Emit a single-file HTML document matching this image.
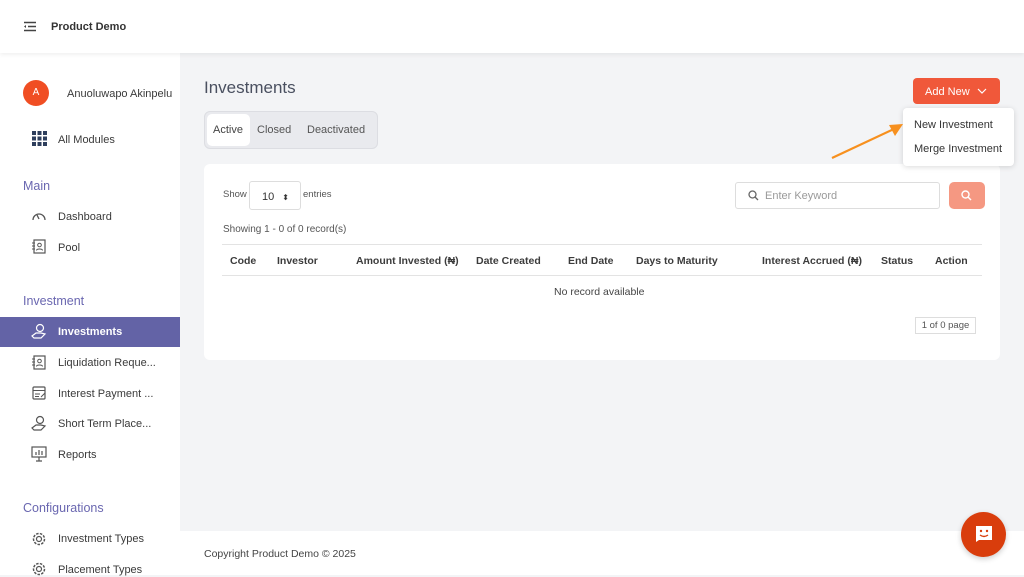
<!DOCTYPE html>
<html><head><meta charset="utf-8"><style>
*{margin:0;padding:0;box-sizing:border-box}
body{width:1024px;height:575px;overflow:hidden;background:#f3f4f6;font-family:"Liberation Sans",sans-serif;position:relative;color:#333}
.a{position:absolute}
.hdr{left:0;top:0;width:1024px;height:53px;background:#fff;box-shadow:0 2px 4px rgba(0,0,0,.06);z-index:2}
.side{left:0;top:53px;width:180px;height:522px;background:#fff}
.sec{color:#6a67b0;font-size:12.5px}
.item{font-size:11px;color:#3a3a3a}
</style></head><body>
<div class="a hdr">
 <svg class="a" style="left:23px;top:21px" width="14" height="11" viewBox="0 0 14 11"><path d="M1 1.5h12M5 5.5h8M1 9.5h12" stroke="#444" stroke-width="1.4"/><path d="M1 5.5l2-1.5v3z" fill="#444"/></svg>
 <div class="a" style="left:51px;top:21px;font-size:11px;font-weight:bold;color:#333">Product Demo</div>
</div>
<div class="a side"></div>
<div class="a" style="left:23px;top:80px;width:26px;height:26px;border-radius:50%;background:#f04e23;color:#fff;font-size:10px;text-align:center;line-height:26px">A</div>
<div class="a item" style="left:67px;top:88px">Anuoluwapo Akinpelu</div>
<svg class="a" style="left:32px;top:131px" width="15" height="15" viewBox="0 0 15 15" fill="#2d3e5c"><rect x="0" y="0" width="4" height="4"/><rect x="5.5" y="0" width="4" height="4"/><rect x="11" y="0" width="4" height="4"/><rect x="0" y="5.5" width="4" height="4"/><rect x="5.5" y="5.5" width="4" height="4"/><rect x="11" y="5.5" width="4" height="4"/><rect x="0" y="11" width="4" height="4"/><rect x="5.5" y="11" width="4" height="4"/><rect x="11" y="11" width="4" height="4"/></svg>
<div class="a item" style="left:58px;top:134px">All Modules</div>
<div class="a sec" style="left:23px;top:179px">Main</div>
<svg class="a" style="left:31px;top:209px" width="16" height="13" viewBox="0 0 16 13"><path d="M2 11A6 6 0 1 1 14 11" fill="none" stroke="#555" stroke-width="1.3"/><path d="M8 10l-2-4" stroke="#555" stroke-width="1.3"/></svg>
<div class="a item" style="left:58px;top:211px">Dashboard</div>
<svg class="a" style="left:32px;top:239px" width="14" height="15" viewBox="0 0 14 15"><rect x="2" y="1" width="11" height="13" fill="none" stroke="#555" stroke-width="1.2"/><circle cx="7.5" cy="6" r="1.8" fill="none" stroke="#555"/><path d="M4.5 11.5c0-2 6-2 6 0" fill="none" stroke="#555"/><path d="M0 4h3M0 7h3M0 10h3" stroke="#555"/></svg>
<div class="a item" style="left:58px;top:242px">Pool</div>
<div class="a sec" style="left:23px;top:294px">Investment</div>
<div class="a" style="left:0;top:317px;width:180px;height:30px;background:#6363a6"></div>
<svg class="a" style="left:31px;top:323px" width="17" height="17" viewBox="0 0 17 17"><circle cx="9" cy="5" r="3.5" fill="none" stroke="#fff" stroke-width="1.2"/><path d="M1 13l4-3h5l4 1-4 4H3z" fill="none" stroke="#fff" stroke-width="1.2"/></svg>
<div class="a item" style="left:58px;top:326px;color:#fff;font-weight:bold">Investments</div>
<svg class="a" style="left:32px;top:355px" width="14" height="15" viewBox="0 0 14 15"><rect x="2" y="1" width="11" height="13" fill="none" stroke="#555" stroke-width="1.2"/><circle cx="7.5" cy="6" r="1.8" fill="none" stroke="#555"/><path d="M4.5 11.5c0-2 6-2 6 0" fill="none" stroke="#555"/><path d="M0 4h3M0 7h3M0 10h3" stroke="#555"/></svg>
<div class="a item" style="left:58px;top:357px">Liquidation Reque...</div>
<svg class="a" style="left:32px;top:386px" width="15" height="14" viewBox="0 0 15 14"><rect x="1" y="1" width="12" height="12" rx="1" fill="none" stroke="#555" stroke-width="1.2"/><path d="M1 4.5h12M3 8h5M3 10.5h4M9 11l4-4" stroke="#555"/></svg>
<div class="a item" style="left:58px;top:388px">Interest Payment ...</div>
<svg class="a" style="left:31px;top:415px" width="17" height="17" viewBox="0 0 17 17"><circle cx="9" cy="5" r="3.5" fill="none" stroke="#555" stroke-width="1.2"/><path d="M1 13l4-3h5l4 1-4 4H3z" fill="none" stroke="#555" stroke-width="1.2"/></svg>
<div class="a item" style="left:58px;top:418px">Short Term Place...</div>
<svg class="a" style="left:31px;top:446px" width="16" height="16" viewBox="0 0 16 16"><rect x="1" y="1" width="14" height="10" fill="none" stroke="#555" stroke-width="1.2"/><path d="M5 9V6M8 9V4M11 9V5M8 11v4M5 15h6" stroke="#555" stroke-width="1.2"/></svg>
<div class="a item" style="left:58px;top:449px">Reports</div>
<div class="a sec" style="left:23px;top:501px">Configurations</div>
<div class="a" style="left:0;top:531px;width:1024px;height:44px;background:#fff"></div>
<svg class="a" style="left:31px;top:531px" width="16" height="16" viewBox="0 0 16 16"><circle cx="8" cy="8" r="5.5" fill="none" stroke="#555" stroke-width="1.5" stroke-dasharray="2.5 1.3"/><circle cx="8" cy="8" r="2.5" fill="none" stroke="#555" stroke-width="1.2"/></svg>
<div class="a item" style="left:58px;top:533px">Investment Types</div>
<svg class="a" style="left:31px;top:561px" width="16" height="16" viewBox="0 0 16 16"><circle cx="8" cy="8" r="5.5" fill="none" stroke="#555" stroke-width="1.5" stroke-dasharray="2.5 1.3"/><circle cx="8" cy="8" r="2.5" fill="none" stroke="#555" stroke-width="1.2"/></svg>
<div class="a item" style="left:58px;top:564px">Placement Types</div>

<div class="a" style="left:204px;top:78px;font-size:17px;color:#4a5060">Investments</div>
<div class="a" style="left:204px;top:111px;width:174px;height:38px;background:#e9eaee;border:1px solid #dcdde2;border-radius:6px"></div>
<div class="a" style="left:207px;top:114px;width:43px;height:32px;background:#fff;border-radius:5px"></div>
<div class="a item" style="left:213px;top:124px;color:#444">Active</div>
<div class="a item" style="left:257px;top:124px;color:#555">Closed</div>
<div class="a item" style="left:307px;top:124px;color:#555">Deactivated</div>

<div class="a" style="left:204px;top:164px;width:796px;height:196px;background:#fff;border-radius:6px"></div>
<div class="a" style="left:223px;top:189px;font-size:9.5px;color:#555">Show</div>
<div class="a" style="left:249px;top:181px;width:52px;height:29px;border:1px solid #ddd;border-radius:3px;font-size:11px;padding:9px 0 0 12px">10 <span style="font-size:8px;margin-left:5px">⬍</span></div>
<div class="a" style="left:303px;top:189px;font-size:9.5px;color:#555">entries</div>
<div class="a" style="left:735px;top:182px;width:205px;height:27px;border:1px solid #ddd;border-radius:3px"></div>
<svg class="a" style="left:748px;top:190px" width="11" height="11" viewBox="0 0 11 11"><circle cx="4.5" cy="4.5" r="3.5" fill="none" stroke="#666" stroke-width="1.3"/><path d="M7 7l3 3" stroke="#666" stroke-width="1.3"/></svg>
<div class="a" style="left:765px;top:190px;font-size:11px;color:#9a9a9a">Enter Keyword</div>
<div class="a" style="left:949px;top:182px;width:36px;height:27px;background:#f59882;border-radius:5px"></div>
<svg class="a" style="left:961px;top:190px" width="11" height="11" viewBox="0 0 11 11"><circle cx="4.5" cy="4.5" r="3.5" fill="none" stroke="#fff" stroke-width="1.4"/><path d="M7 7l3 3" stroke="#fff" stroke-width="1.4"/></svg>
<div class="a" style="left:223px;top:224px;font-size:10px;color:#555">Showing 1 - 0 of 0 record(s)</div>
<div class="a" style="left:222px;top:244px;width:760px;height:1px;background:#e3e3e3"></div>
<div class="a" style="left:222px;top:275px;width:760px;height:1px;background:#e3e3e3"></div>
<div class="a" style="top:255px;left:0;font-size:10.5px;font-weight:bold;color:#3c3c3c;width:1024px;height:14px">
 <span class="a" style="left:230px">Code</span><span class="a" style="left:277px">Investor</span><span class="a" style="left:356px">Amount Invested (₦)</span><span class="a" style="left:476px">Date Created</span><span class="a" style="left:568px">End Date</span><span class="a" style="left:636px">Days to Maturity</span><span class="a" style="left:762px">Interest Accrued (₦)</span><span class="a" style="left:881px">Status</span><span class="a" style="left:935px">Action</span>
</div>
<div class="a" style="left:554px;top:286px;font-size:10.5px;color:#444">No record available</div>
<div class="a" style="left:915px;top:317px;width:61px;height:17px;border:1px solid #ddd;font-size:9.5px;color:#555;text-align:center;line-height:15px">1 of 0 page</div>

<div class="a" style="left:913px;top:78px;width:87px;height:26px;background:#f0583a;border-radius:4px;color:#fff;font-size:11px;padding:8px 0 0 12px">Add New <svg width="10" height="7" viewBox="0 0 10 7" style="margin-left:4px"><path d="M1 1l4 4 4-4" fill="none" stroke="#fff" stroke-width="1.2"/></svg></div>
<div class="a" style="left:903px;top:108px;width:111px;height:58px;background:#fff;border-radius:4px;box-shadow:0 1px 6px rgba(0,0,0,.15)"></div>
<div class="a item" style="left:914px;top:119px;color:#333">New Investment</div>
<div class="a item" style="left:914px;top:143px;color:#333">Merge Investment</div>
<svg class="a" style="left:828px;top:118px" width="80" height="45" viewBox="0 0 80 45"><path d="M4 40L68 10" stroke="#f7901e" stroke-width="2.2"/><path d="M75 6l-14 1 6 11z" fill="#f7901e"/></svg>

<div class="a" style="left:204px;top:548px;font-size:10.5px;color:#444">Copyright Product Demo © 2025</div>
<div class="a" style="left:961px;top:512px;width:45px;height:45px;border-radius:50%;background:#d93d0c;box-shadow:0 2px 6px rgba(0,0,0,.2)"></div>
<svg class="a" style="left:975px;top:525px" width="18" height="17" viewBox="0 0 18 17"><path d="M1 1h16v14H4l-3 2z" fill="#fff"/><circle cx="6" cy="6" r="1.2" fill="#d93d0c"/><circle cx="12" cy="6" r="1.2" fill="#d93d0c"/><path d="M5 10q4 3 8 0" fill="none" stroke="#d93d0c" stroke-width="1.4"/></svg>
</body></html>
